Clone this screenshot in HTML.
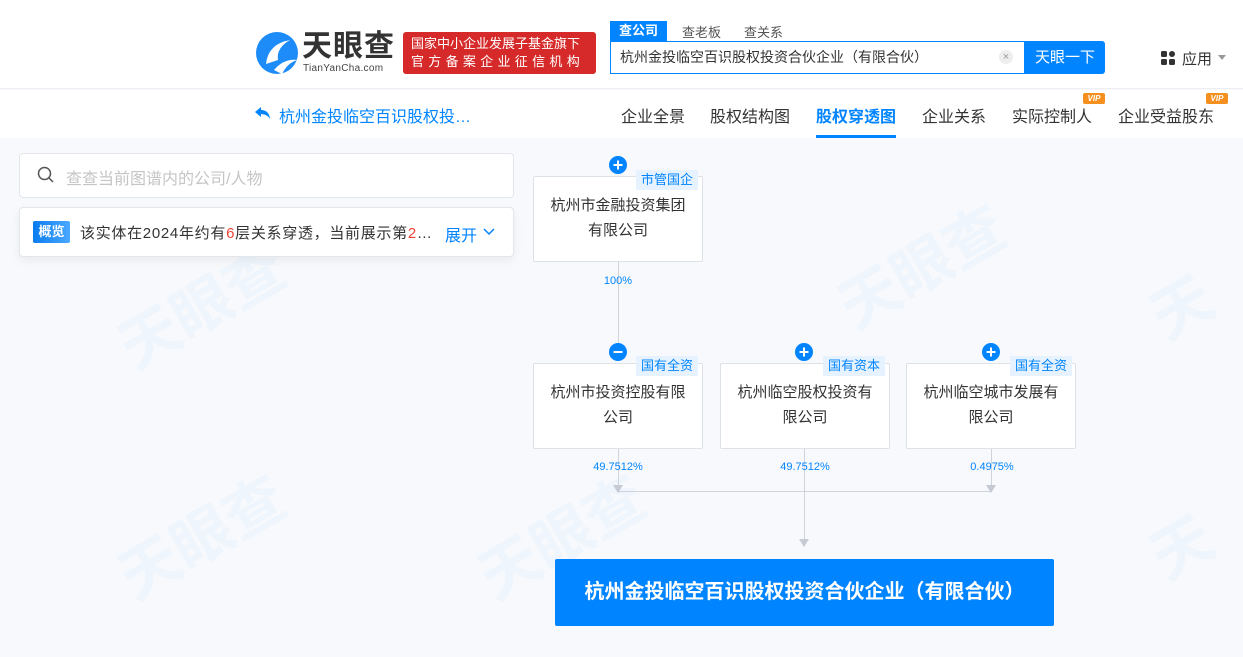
<!DOCTYPE html>
<html><head><meta charset="utf-8"><style>
*{margin:0;padding:0;box-sizing:border-box}
body{width:1243px;height:657px;overflow:hidden;background:#f7f9fc;font-family:"Liberation Sans","Noto Sans CJK SC",sans-serif;position:relative;color:#333}
.a{position:absolute}
.hdr{left:0;top:0;width:1243px;height:89px;background:#fff;border-bottom:1px solid #eceef2}
.nav{left:0;top:90px;width:1243px;height:48px;background:#fff}
.tab{top:103px;font-size:16px;color:#333}
.box{background:#fff;border:1px solid #dde1e8;border-radius:2px;text-align:center;font-size:15px;color:#333;line-height:25px;padding-top:16px;width:170px;height:86px}
.tag{background:#e6f2ff;color:#0084ff;font-size:13px;line-height:20px;padding:0 5px;height:20px}
.circ{width:18px;height:18px}
.pct{font-size:11px;color:#0084ff;width:100px;text-align:center}
.vl{background:#cfd4dc;width:1px}
.wm{color:rgba(0,132,255,0.035);font-size:60px;font-weight:bold;transform:rotate(-30deg)}
</style></head><body>
<div class="a wm" style="left:110px;top:260px">天眼查</div>
<div class="a wm" style="left:830px;top:220px">天眼查</div>
<div class="a wm" style="left:110px;top:490px">天眼查</div>
<div class="a wm" style="left:470px;top:490px">天眼查</div>
<div class="a wm" style="left:1150px;top:260px">天</div>
<div class="a wm" style="left:1150px;top:500px">天</div>

<div class="a hdr"></div>
<svg class="a" style="left:254px;top:30px" width="46" height="46" viewBox="0 0 46 46"><circle cx="23" cy="23" r="21" fill="#1d8cf8"/><path d="M12 34 Q14 14 36 10 Q22 18 24 30 Z" fill="#fff"/><path d="M20 40 Q30 28 44 30 Q34 32 28 44Z" fill="#fff"/></svg>
<div class="a" style="left:302px;top:30px;font-size:30px;font-weight:bold;color:#333;line-height:34px;letter-spacing:1px">天眼查</div>
<div class="a" style="left:303px;top:63px;font-size:10px;color:#444;letter-spacing:0.3px">TianYanCha.com</div>
<div class="a" style="left:403px;top:32px;width:193px;height:42px;background:#d62a2a;border-radius:3px;color:#fff;font-size:13px;line-height:18px;padding:3px 8px;text-align:justify">国家中小企业发展子基金旗下<br><span style="letter-spacing:4.3px">官方备案企业征信机构</span></div>
<div class="a" style="left:610px;top:21px;width:57px;height:20px;background:#0084ff;color:#fff;font-size:13px;text-align:center;line-height:19px;font-weight:bold">查公司</div>
<div class="a" style="left:682px;top:22px;font-size:13px;color:#555">查老板</div>
<div class="a" style="left:744px;top:22px;font-size:13px;color:#555">查关系</div>
<div class="a" style="left:610px;top:41px;width:415px;height:33px;border:1px solid #0084ff;background:#fff;font-size:14px;color:#333;line-height:31px;padding-left:9px">杭州金投临空百识股权投资合伙企业（有限合伙）</div>
<div class="a" style="left:999px;top:50px;width:14px;height:14px;border-radius:50%;background:#eee;color:#999;font-size:11px;text-align:center;line-height:14px">×</div>
<div class="a" style="left:1025px;top:41px;width:80px;height:33px;background:#0084ff;color:#fff;font-size:15px;text-align:center;line-height:33px;border-radius:0 3px 3px 0">天眼一下</div>
<svg class="a" style="left:1161px;top:51px" width="15" height="15"><rect x="0" y="0" width="6" height="6" rx="1.5" fill="#333"/><rect x="8" y="0" width="6" height="6" rx="3" fill="#333"/><rect x="0" y="8" width="6" height="6" rx="1.5" fill="#333"/><rect x="8" y="8" width="6" height="6" rx="1.5" fill="#333"/></svg>
<div class="a" style="left:1182px;top:48px;font-size:15px;color:#333">应用</div>
<div class="a" style="left:1218px;top:55px;border:4px solid transparent;border-top:5px solid #999"></div>

<div class="a nav"></div>
<svg class="a" style="left:254px;top:106px" width="18" height="14" viewBox="0 0 18 14"><path d="M7 1 L1 6 L7 11 L7 8 Q13 8 16 13 Q15 4 7 4 Z" fill="#0084ff"/></svg>
<div class="a" style="left:279px;top:103px;color:#0084ff;font-size:16px">杭州金投临空百识股权投…</div>
<div class="a tab" style="left:621px">企业全景</div>
<div class="a tab" style="left:710px">股权结构图</div>
<div class="a tab" style="left:816px;color:#0084ff;font-weight:bold">股权穿透图</div>
<div class="a" style="left:816px;top:135px;width:80px;height:3px;background:#0084ff"></div>
<div class="a tab" style="left:922px">企业关系</div>
<div class="a tab" style="left:1012px">实际控制人</div>
<div class="a tab" style="left:1118px">企业受益股东</div>
<div class="a" style="left:1083px;top:93px;width:22px;height:11px;background:#f5901e;color:#fff;font-size:8px;font-weight:bold;font-style:italic;text-align:center;line-height:11px;border-radius:2px">VIP</div>
<div class="a" style="left:1206px;top:93px;width:22px;height:11px;background:#f5901e;color:#fff;font-size:8px;font-weight:bold;font-style:italic;text-align:center;line-height:11px;border-radius:2px">VIP</div>

<div class="a" style="left:19px;top:153px;width:495px;height:45px;background:#fff;border:1px solid #e3e6eb;border-radius:4px"></div>
<svg class="a" style="left:37px;top:166px" width="18" height="18"><circle cx="7.5" cy="7.5" r="6" fill="none" stroke="#555" stroke-width="1.5"/><line x1="12" y1="12" x2="16" y2="16" stroke="#555" stroke-width="1.5"/></svg>
<div class="a" style="left:66px;top:165px;font-size:16px;color:#c5c5c5">查查当前图谱内的公司/人物</div>
<div class="a" style="left:19px;top:207px;width:495px;height:50px;background:#fff;border:1px solid #e3e6eb;border-radius:4px;box-shadow:0 4px 10px rgba(0,0,0,0.06)"></div>
<div class="a" style="left:33px;top:221px;width:37px;height:22px;background:linear-gradient(90deg,#0a7cf0,#4aa8ff);color:#fff;font-size:13px;font-weight:bold;text-align:center;line-height:22px;border-radius:2px">概览</div>
<div class="a" style="left:80px;top:222px;font-size:15px;letter-spacing:0.7px;color:#333;white-space:nowrap">该实体在2024年约有<span style="color:#f04134">6</span>层关系穿透，当前展示第<span style="color:#f04134">2</span>…</div>
<div class="a" style="left:445px;top:222px;font-size:16px;color:#0084ff">展开</div>
<svg class="a" style="left:482px;top:227px" width="14" height="10"><path d="M2 2 L7 7 L12 2" fill="none" stroke="#0084ff" stroke-width="1.5"/></svg>

<!-- lines -->
<div class="a vl" style="left:618px;top:262px;height:86px"></div>
<div class="a vl" style="left:618px;top:448px;height:42px"></div>
<div class="a vl" style="left:804px;top:448px;height:98px"></div>
<div class="a vl" style="left:991px;top:448px;height:42px"></div>
<div class="a" style="left:618px;top:491px;width:374px;height:1px;background:#cfd4dc"></div>
<div class="a" style="left:613px;top:485px;border:5px solid transparent;border-top:8px solid #c5cad3"></div>
<div class="a" style="left:986px;top:485px;border:5px solid transparent;border-top:8px solid #c5cad3"></div>
<div class="a" style="left:799px;top:539px;border:5px solid transparent;border-top:8px solid #c5cad3"></div>
<div class="a pct" style="left:568px;top:275px">100%</div>
<div class="a pct" style="left:568px;top:461px">49.7512%</div>
<div class="a pct" style="left:755px;top:461px">49.7512%</div>
<div class="a pct" style="left:942px;top:461px">0.4975%</div>

<div class="a box" style="left:533px;top:176px">杭州市金融投资集团<br>有限公司</div>
<div class="a tag" style="left:636px;top:170px">市管国企</div>
<svg class="a circ" style="left:609px;top:156px" viewBox="0 0 18 18"><circle cx="9" cy="9" r="9" fill="#0084ff"/><path d="M4.5 9H13.5M9 4.5V13.5" stroke="#fff" stroke-width="2"/></svg>

<div class="a box" style="left:533px;top:363px">杭州市投资控股有限<br>公司</div>
<div class="a tag" style="left:636px;top:356px">国有全资</div>
<svg class="a circ" style="left:609px;top:343px" viewBox="0 0 18 18"><circle cx="9" cy="9" r="9" fill="#0084ff"/><path d="M4.5 9H13.5" stroke="#fff" stroke-width="2"/></svg>
<div class="a box" style="left:720px;top:363px">杭州临空股权投资有<br>限公司</div>
<div class="a tag" style="left:823px;top:356px">国有资本</div>
<svg class="a circ" style="left:795px;top:343px" viewBox="0 0 18 18"><circle cx="9" cy="9" r="9" fill="#0084ff"/><path d="M4.5 9H13.5M9 4.5V13.5" stroke="#fff" stroke-width="2"/></svg>
<div class="a box" style="left:906px;top:363px">杭州临空城市发展有<br>限公司</div>
<div class="a tag" style="left:1010px;top:356px">国有全资</div>
<svg class="a circ" style="left:982px;top:343px" viewBox="0 0 18 18"><circle cx="9" cy="9" r="9" fill="#0084ff"/><path d="M4.5 9H13.5M9 4.5V13.5" stroke="#fff" stroke-width="2"/></svg>

<div class="a" style="left:555px;top:559px;width:499px;height:67px;background:#0084ff;color:#fff;font-size:20px;font-weight:bold;text-align:center;line-height:67px;border-radius:2px">杭州金投临空百识股权投资合伙企业（有限合伙）</div>
</body></html>
